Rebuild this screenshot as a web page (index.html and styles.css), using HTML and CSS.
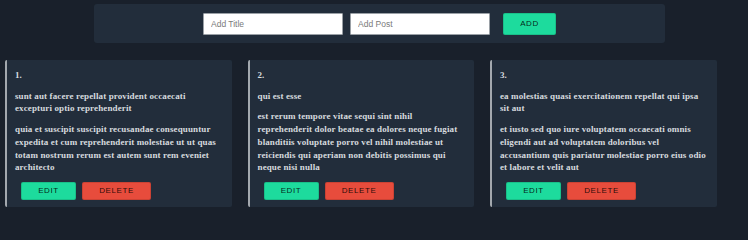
FILE: index.html
```html
<!DOCTYPE html>
<html>
<head>
<meta charset="utf-8">
<link rel="stylesheet" href="styles.css">
</head>
<body>
<div class="page">
  <form class="form-bar">
    <input class="field" type="text" placeholder="Add Title">
    <input class="field field-post" type="text" placeholder="Add Post">
    <button class="btn btn-add" type="button">ADD</button>
  </form>
  <div class="cards">
    <div class="card">
      <p class="num">1.</p>
      <p class="title">sunt aut facere repellat provident occaecati excepturi optio reprehenderit</p>
      <p class="body">quia et suscipit suscipit recusandae consequuntur expedita et cum reprehenderit molestiae ut ut quas totam nostrum rerum est autem sunt rem eveniet architecto</p>
      <div class="actions">
        <button class="btn btn-edit" type="button">EDIT</button>
        <button class="btn btn-delete" type="button">DELETE</button>
      </div>
    </div>
    <div class="card">
      <p class="num">2.</p>
      <p class="title">qui est esse</p>
      <p class="body">est rerum tempore vitae sequi sint nihil reprehenderit dolor beatae ea dolores neque fugiat blanditiis voluptate porro vel nihil molestiae ut reiciendis qui aperiam non debitis possimus qui neque nisi nulla</p>
      <div class="actions">
        <button class="btn btn-edit" type="button">EDIT</button>
        <button class="btn btn-delete" type="button">DELETE</button>
      </div>
    </div>
    <div class="card">
      <p class="num">3.</p>
      <p class="title">ea molestias quasi exercitationem repellat qui ipsa sit aut</p>
      <p class="body">et iusto sed quo iure voluptatem occaecati omnis eligendi aut ad voluptatem doloribus vel accusantium quis pariatur molestiae porro eius odio et labore et velit aut</p>
      <div class="actions">
        <button class="btn btn-edit" type="button">EDIT</button>
        <button class="btn btn-delete" type="button">DELETE</button>
      </div>
    </div>
  </div>
</div>
</body>
</html>
```

FILE: styles.css
```css
html, body {
  margin: 0;
  padding: 0;
  background: #19202b;
}

.page {
  padding-top: 4px;
  width: 748px;
  height: 223px;
  box-sizing: border-box;
  overflow: hidden;
}

.form-bar {
  margin: 0 0 0 94px;
  width: 571px;
  height: 39px;
  background: #222d3b;
  border-radius: 3px;
  display: flex;
  align-items: center;
  justify-content: center;
}

.field {
  width: 140px;
  height: 22px;
  box-sizing: border-box;
  border: 1px solid #9aa0a6;
  border-radius: 1px;
  background: #ffffff;
  padding: 0 7px;
  font-family: "Liberation Sans", Arial, sans-serif;
  font-size: 8.5px;
  color: #333;
  outline: none;
}

.field::placeholder {
  color: #7a7a7a;
}

.field-post {
  margin-left: 7px;
}

.btn {
  border: 1px solid rgba(0, 0, 0, 0.12);
  border-radius: 2px;
  font-family: "Liberation Sans", Arial, sans-serif;
  font-size: 8px;
  letter-spacing: 0.6px;
  color: rgba(0, 0, 0, 0.85);
  padding: 0;
  cursor: pointer;
}

.btn-add {
  margin-left: 13px;
  width: 53px;
  height: 22px;
  background: #1ddb9d;
}

.cards {
  margin-top: 17px;
  padding-left: 5px;
  display: flex;
  gap: 16px;
}

.card {
  width: 226.5px;
  box-sizing: border-box;
  background: #222d3b;
  border-left: 2px solid #a3a8ae;
  border-radius: 2px;
  padding: 9px 8px 7px 8px;
  display: flex;
  flex-direction: column;
  gap: 8px;
  font-family: "Liberation Serif", "Times New Roman", serif;
  font-size: 9px;
  font-weight: bold;
  letter-spacing: 0.12px;
  line-height: 12.7px;
  color: #d6dadf;
}

.card p {
  margin: 0;
}

.actions {
  display: flex;
  gap: 6px;
  padding-left: 6px;
}

.btn-edit {
  width: 55px;
  height: 18px;
  background: #1ddb9d;
}

.btn-delete {
  width: 69px;
  height: 18px;
  background: #e74c3c;
}
```
